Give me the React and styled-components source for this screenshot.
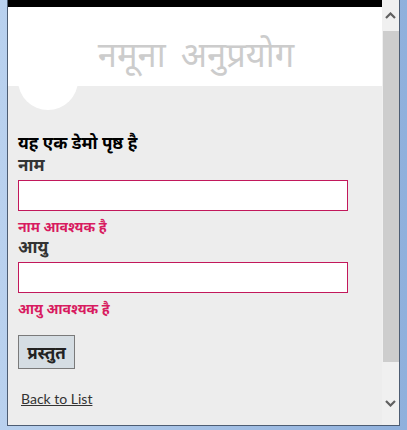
import React from "react";
import styled, { createGlobalStyle } from "styled-components";

const GlobalStyle = createGlobalStyle`
  html, body {
    margin: 0;
    padding: 0;
    background: #a9c4e6;
  }
`;

const Window = styled.div`
  width: 407px;
  height: 430px;
  box-sizing: border-box;
  display: flex;
  flex-direction: column;
  background: linear-gradient(90deg, #b9d1ee, #8fb0dc);
  padding: 0 7px 4px 7px;
`;

const Inner = styled.div`
  flex: 1;
  display: flex;
  border-left: 1px solid #4d5d73;
  border-right: 1px solid #4d5d73;
  border-bottom: 1px solid #4d5d73;
  overflow: hidden;
`;

const Viewport = styled.div`
  flex: 1;
  display: flex;
  flex-direction: column;
  background: #ededed;
  font-family: "Noto Sans", "Open Sans", sans-serif;
`;

const TopBar = styled.div`
  height: 7px;
  background: #000;
`;

const Header = styled.header`
  position: relative;
  height: 79px;
  background: #fff;
  display: flex;
  justify-content: center;
  align-items: center;
`;

const Logo = styled.div`
  position: absolute;
  left: 10px;
  top: 43px;
  width: 60px;
  height: 60px;
  border-radius: 50%;
  background: #fff;
`;

const Title = styled.h1`
  margin: 0;
  padding: 14px 0 0 2px;
  font-size: 34.5px;
  font-weight: normal;
  color: #cccccc;
  word-spacing: 6px;
`;

const Main = styled.main`
  padding: 46px 0 0 10px;
  display: flex;
  flex-direction: column;
`;

const Lead = styled.p`
  margin: 0;
  font-size: 17px;
  font-weight: bold;
  color: #000;
  line-height: 22px;
`;

const Label = styled.label`
  font-size: 17px;
  font-weight: bold;
  color: #333;
  line-height: 22px;
`;

const Input = styled.input`
  width: 330px;
  height: 31px;
  box-sizing: border-box;
  margin-top: 4px;
  border: 1px solid #c2185b;
  background: #fff;
  outline: none;
`;

const Error = styled.span`
  margin-top: 6px;
  font-size: 14px;
  font-weight: bold;
  color: #d81b60;
  line-height: 19px;
`;

const Button = styled.button`
  align-self: flex-start;
  margin-top: 17px;
  width: 57px;
  height: 34px;
  background: #d5dde3;
  border: 1px solid #7a7a7a;
  font-family: inherit;
  font-size: 17px;
  font-weight: bold;
  color: #222;
  padding: 0;
`;

const BackLink = styled.a`
  align-self: flex-start;
  margin: 21px 0 0 3px;
  font-family: Lato, "Noto Sans", sans-serif;
  font-size: 14px;
  color: #333;
  text-decoration: underline;
`;

const Scrollbar = styled.div`
  width: 17px;
  display: flex;
  flex-direction: column;
  background: #f0f0f0;
`;

const Arrow = styled.div`
  height: 31px;
  box-sizing: border-box;
  display: flex;
  justify-content: center;
  align-items: ${(p) => (p.$down ? "flex-start" : "center")};
  padding-top: ${(p) => (p.$down ? "5px" : "0")};
`;

const Thumb = styled.div`
  flex: 1;
  margin: 0 0 32px 1px;
  background: #cdcdcd;
`;

const Chevron = ({ down }) => (
  <svg width="11" height="8" viewBox="0 0 11 8">
    <path
      d={down ? "M1 2 L5.5 6.5 L10 2" : "M1 6 L5.5 1.5 L10 6"}
      fill="none"
      stroke="#606060"
      strokeWidth="2.2"
    />
  </svg>
);

const App = () => {
  return (
    <>
      <GlobalStyle />
      <Window>
        <Inner>
          <Viewport>
            <TopBar />
            <Header>
              <Logo />
              <Title>नमूना अनुप्रयोग</Title>
            </Header>
            <Main>
              <Lead>यह एक डेमो पृष्ठ है</Lead>
              <Label>नाम</Label>
              <Input type="text" />
              <Error>नाम आवश्यक है</Error>
              <Label>आयु</Label>
              <Input type="text" />
              <Error>आयु आवश्यक है</Error>
              <Button>प्रस्तुत</Button>
              <BackLink href="#">Back to List</BackLink>
            </Main>
          </Viewport>
          <Scrollbar>
            <Arrow>
              <Chevron />
            </Arrow>
            <Thumb />
            <Arrow $down>
              <Chevron down />
            </Arrow>
          </Scrollbar>
        </Inner>
      </Window>
    </>
  );
};

export default App;
